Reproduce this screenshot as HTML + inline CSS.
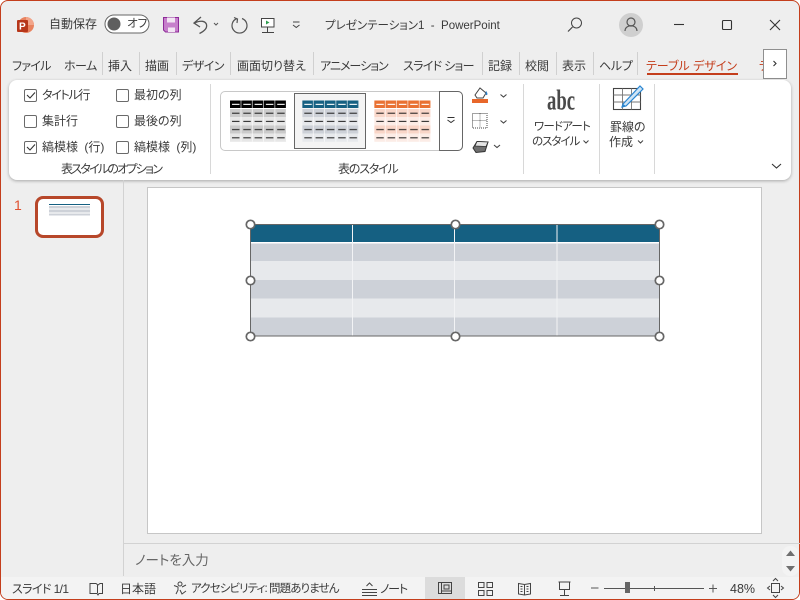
<!DOCTYPE html>
<html lang="ja"><head><meta charset="utf-8"><style>
html,body{margin:0;padding:0;width:800px;height:600px;overflow:hidden;background:#fff}
body{font-family:"Liberation Sans","Noto Sans CJK JP",sans-serif;font-size:12px;color:#3a3a3a;font-feature-settings:"palt";position:relative}
.t{position:absolute;white-space:nowrap;line-height:16px}
.b{position:absolute}
.cb{position:absolute;width:11px;height:11px;border:1px solid #6a6a6a;border-radius:2px;background:#fff}
svg{position:absolute;overflow:visible}
#win{position:absolute;left:0;top:0;width:798px;height:598px;background:#eee;border:1px solid #c43e1c;border-radius:8px;overflow:hidden}
</style></head><body>
<div id="win"></div>
<div class="b" style="left:1px;top:577px;width:798px;height:22px;background:#f3f3f3;border-radius:0 0 7px 7px"></div>
<!-- Title bar -->
<svg style="left:0;top:0" width="800" height="600" viewBox="0 0 800 600">
<circle cx="26" cy="25" r="8" fill="#e8825f"/><path d="M26 17a8 8 0 0 1 8 8h-8z" fill="#f2a58a"/>
<rect x="17" y="20" width="11" height="12" rx="1" fill="#b7371a"/>
<text x="19" y="29.500" font-family="'Liberation Sans',sans-serif" font-size="10" font-weight="700" fill="#fff">P</text>
<rect x="105" y="15" width="44" height="18" rx="9" fill="#fff" stroke="#666" stroke-width="1"/>
<circle cx="114" cy="24" r="6.500" fill="#5f5f5f"/>
<path d="M163.500 17.500h15v14.500h-13l-2-2z" fill="#c67fcb" stroke="#8d2a98" stroke-width="1"/>
<rect x="167" y="17.500" width="8" height="5" fill="#f2e4f3"/><rect x="168" y="27.500" width="7" height="4.500" fill="#f2e4f3"/>
<path d="M201 17l-7 6 6 4M194.500 23c6-3 11-2 12 1.500 1 4-3 7-7 9" fill="none" stroke="#555" stroke-width="1.300"/>
<path d="M214 23l2 2 2-2" fill="none" stroke="#555"/>
<path d="M237 18.500a7.500 7.500 0 1 0 5 0M234 17.500l3.500 1.500-.5 4" fill="none" stroke="#555" stroke-width="1.200"/>
<rect x="261.500" y="18.500" width="12.500" height="8.500" fill="#fff" stroke="#444"/><path d="M266 20.500l3.500 2-3.500 2z" fill="#2f9e4f"/>
<path d="M267.500 27v5M262 32.500h12" stroke="#444" fill="none"/>
<path d="M293 22h6.500M293 25l3.250 2.500 3.250-2.500" fill="none" stroke="#444"/>
<!-- search, user, controls -->
<circle cx="576.500" cy="23" r="5" fill="none" stroke="#444"/><path d="M572.500 27l-4.500 4.500" stroke="#444" stroke-width="1.200"/>
<circle cx="631" cy="25" r="12" fill="#cfcfcf"/><circle cx="631" cy="22" r="4" fill="none" stroke="#555" stroke-width="1.200"/><path d="M625 31c0-7 12-7 12 0" fill="none" stroke="#555" stroke-width="1.200"/>
<path d="M674 24.500h10" stroke="#333" stroke-width="1.100"/>
<rect x="722.500" y="20.500" width="9" height="9" rx="1" fill="none" stroke="#333" stroke-width="1.100"/>
<path d="M770 20l10 10M780 20l-10 10" stroke="#333" stroke-width="1.100"/>
</svg>
<div class="t" style="left:49px;top:16px">自動保存</div>
<div class="t" style="left:127px;top:16px;font-size:11.500px">オフ</div>
<div class="t" style="left:325px;top:18px;font-size:11.500px">プレゼンテーション1&nbsp; -&nbsp; PowerPoint</div>
<!-- Tabs -->
<div class="t" style="left:12px;top:58px;letter-spacing:-.7px">ファイル</div>
<div class="t" style="left:64px;top:58px;letter-spacing:-.5px">ホーム</div>
<div class="t" style="left:108px;top:58px">挿入</div>
<div class="t" style="left:145px;top:58px">描画</div>
<div class="t" style="left:182px;top:58px;letter-spacing:-.5px">デザイン</div>
<div class="t" style="left:237px;top:58px">画面切り替え</div>
<div class="t" style="left:320px;top:58px;letter-spacing:-1px">アニメーション</div>
<div class="t" style="left:403px;top:58px;letter-spacing:-.7px">スライド ショー</div>
<div class="t" style="left:488px;top:58px">記録</div>
<div class="t" style="left:525px;top:58px">校閲</div>
<div class="t" style="left:562px;top:58px">表示</div>
<div class="t" style="left:599px;top:58px;letter-spacing:-.3px">ヘルプ</div>
<div class="t" style="left:646px;top:58px;color:#c43e1c;font-weight:400">テーブル デザイン</div>
<div class="t" style="left:759px;top:58px;color:#c43e1c">テ</div>
<div class="b" style="left:647px;top:73px;width:91px;height:2px;background:#c43e1c"></div>
<div class="b" style="left:102px;top:52px;width:1px;height:23px;background:#d0d0d0;box-shadow:37px 0 #d0d0d0,74px 0 #d0d0d0,128px 0 #d0d0d0,211px 0 #d0d0d0,380px 0 #d0d0d0,417px 0 #d0d0d0,454px 0 #d0d0d0,491px 0 #d0d0d0,535px 0 #d0d0d0"></div>
<div class="b" style="left:763px;top:49px;width:22px;height:28px;background:#fff;border:1px solid #8f8f8f"></div>
<svg style="left:0;top:0" width="800" height="100"><path d="M773.500 61l2.500 2.500-2.500 2.500" fill="none" stroke="#333" stroke-width="1.100"/></svg>
<!-- Ribbon -->
<div class="b" style="left:9px;top:80px;width:782px;height:100px;background:#fff;border-radius:8px;box-shadow:0 1px 3px rgba(0,0,0,.3)"></div>
<div class="b" style="left:210px;top:84px;width:1px;height:90px;background:#d8d8d8;box-shadow:313px 0 #d8d8d8,389px 0 #d8d8d8,444px 0 #d8d8d8"></div>
<!-- Checkboxes -->
<div class="cb" style="left:24px;top:89px"></div><div class="cb" style="left:116px;top:89px"></div>
<div class="cb" style="left:24px;top:115px"></div><div class="cb" style="left:116px;top:115px"></div>
<div class="cb" style="left:24px;top:141px"></div><div class="cb" style="left:116px;top:141px"></div>
<svg style="left:0;top:0" width="100" height="160"><path d="M27 95l3 3 5-5.500M27 147l3 3 5-5.500" fill="none" stroke="#333" stroke-width="1.100"/></svg>
<div class="t" style="left:42px;top:87px;letter-spacing:-1.300px">タイトル行</div>
<div class="t" style="left:134px;top:87px">最初の列</div>
<div class="t" style="left:42px;top:113px">集計行</div>
<div class="t" style="left:134px;top:113px">最後の列</div>
<div class="t" style="left:42px;top:139px;word-spacing:3px">縞模様 (行)</div>
<div class="t" style="left:134px;top:139px;word-spacing:3px">縞模様 (列)</div>
<div class="t" style="left:61px;top:161px;letter-spacing:-1.750px">表スタイルのオプション</div>
<div class="t" style="left:338px;top:161px;letter-spacing:-1.200px">表のスタイル</div>
<!-- Gallery -->
<div class="b" style="left:220px;top:91px;width:241px;height:58px;border:1px solid #c8c8c8;border-radius:5px;background:#fff"></div>
<div class="b" style="left:294px;top:93px;width:70px;height:54px;border:1px solid #666;background:#f4f4f4"></div>
<div class="b" style="left:439px;top:91px;width:22px;height:58px;border:1px solid #666;border-radius:0 5px 5px 0;background:#fff"></div>
<svg style="left:0;top:0" width="800" height="180">
<defs>
<pattern id="d" width="11.300" height="8.200" patternUnits="userSpaceOnUse" x="0" y="8.500"><rect x="2" y="3.700" width="7.500" height="1" fill="#1a1a1a"/><rect x="10.700" y="0" width=".6" height="8.200" fill="#fff"/></pattern>
<pattern id="w" width="11.300" height="8" patternUnits="userSpaceOnUse" x="0" y="0"><rect x="2" y="3.300" width="7.500" height="1.100" fill="#fff"/><rect x="10.700" y="0" width=".6" height="8" fill="#fff"/></pattern>
</defs>
<g transform="translate(230,100.500)"><rect width="56.500" height="7.500" fill="#000"/><rect y="8.500" width="56.500" height="8.200" fill="#cbcbcb"/><rect y="16.700" width="56.500" height="8.200" fill="#e7e7e7"/><rect y="24.900" width="56.500" height="8.200" fill="#cbcbcb"/><rect y="33.100" width="56.500" height="8.200" fill="#e7e7e7"/><rect width="56.500" height="7.500" fill="url(#w)"/><rect y="8.500" width="56.500" height="32.800" fill="url(#d)"/></g>
<g transform="translate(302.300,100.500)"><rect width="56.500" height="7.500" fill="#156082"/><rect y="8.500" width="56.500" height="8.200" fill="#cdd1d8"/><rect y="16.700" width="56.500" height="8.200" fill="#e7e9ec"/><rect y="24.900" width="56.500" height="8.200" fill="#cdd1d8"/><rect y="33.100" width="56.500" height="8.200" fill="#e7e9ec"/><rect width="56.500" height="7.500" fill="url(#w)"/><rect y="8.500" width="56.500" height="32.800" fill="url(#d)"/></g>
<g transform="translate(374.300,100.500)"><rect width="56.500" height="7.500" fill="#e97132"/><rect y="8.500" width="56.500" height="8.200" fill="#f9d6c8"/><rect y="16.700" width="56.500" height="8.200" fill="#fcece6"/><rect y="24.900" width="56.500" height="8.200" fill="#f9d6c8"/><rect y="33.100" width="56.500" height="8.200" fill="#fcece6"/><rect width="56.500" height="7.500" fill="url(#w)"/><rect y="8.500" width="56.500" height="32.800" fill="url(#d)"/></g>
<path d="M447.500 117.500h7M447.500 120l3.500 2.500 3.500-2.500" fill="none" stroke="#333" stroke-width="1"/>
<!-- fill, border, eraser -->
<path d="M475 95l5-7 6 5-3 5h-6z" fill="#fff" stroke="#444"/><path d="M486 91c1 1 2 3 1 4-1 .5-2-1-1-4z" fill="#2a7fc9"/>
<rect x="472" y="99" width="16" height="4" fill="#e8672a"/>
<path d="M500.500 94.500l3 2.500 3-2.500M500.500 120.500l3 2.500 3-2.500M494 145l3 2.500 3-2.500" fill="none" stroke="#444" stroke-width="1.100"/>
<g shape-rendering="crispEdges"><rect x="472.500" y="113.500" width="14.500" height="14.500" fill="none" stroke="#444" stroke-dasharray="1 1"/>
<path d="M480 113.500v14.500M472.500 120.500h14.500" stroke="#777" stroke-dasharray="1 1" fill="none"/></g>
<path d="M473 148l4-6.500 11 .5-3 9.500-9 1z" fill="#6f6f6f" stroke="#333"/><path d="M477 141.500l11 .5-2 4.500-11-.5z" fill="#e4e4e4" stroke="#333" stroke-width=".8"/>
<!-- WordArt -->
<text x="547" y="109.500" font-family="'Liberation Serif',serif" font-size="29" font-weight="700" fill="#4a4a4a" textLength="28" lengthAdjust="spacingAndGlyphs">abc</text>
<!-- Borders -->
<rect x="613.500" y="88.500" width="27" height="21" fill="#fff" stroke="#444" stroke-width="1.100"/>
<path d="M613.500 95h27M613.500 102h27M622.500 88.500v21M631.500 88.500v21" stroke="#777" fill="none" stroke-width=".9"/>
<path d="M623 104l17-18 3 3-17 17-4 1z" fill="#cfe4f5" stroke="#2a86d1" stroke-width="1.200"/><path d="M622 107l1-3 3 2z" fill="#2a86d1"/>
<path d="M583.500 140.500l2.500 2.500 2.500-2.500M638 140.500l2.500 2.500 2.500-2.500" fill="none" stroke="#444"/>
<path d="M772 164l4.500 4 4.500-4" fill="none" stroke="#333" stroke-width="1.100"/>
</svg>
<div class="t" style="left:534px;top:119px;font-size:11.500px;letter-spacing:-.8px">ワードアート</div>
<div class="t" style="left:532px;top:134px;font-size:11.500px;letter-spacing:-1px">のスタイル</div>
<div class="t" style="left:610px;top:119px">罫線の</div>
<div class="t" style="left:609px;top:134px">作成</div>
<!-- Panes -->
<div class="b" style="left:123px;top:180px;width:1px;height:396px;background:#d2d2d2"></div>
<div class="b" style="left:124px;top:543px;width:676px;height:1px;background:#d2d2d2"></div>
<div class="t" style="left:14px;top:197px;color:#e0502f;font-size:14px">1</div>
<div class="b" style="left:35px;top:196px;width:63px;height:36px;border:3px solid #b7472a;border-radius:8px;background:#fff"></div>
<svg style="left:0;top:0" width="130" height="240">
<rect x="49" y="204" width="41" height="1" fill="#156082"/>
<rect x="49" y="206" width="41" height="2" fill="#cdd1d8"/><rect x="49" y="208" width="41" height="2" fill="#e7e9ec"/><rect x="49" y="210" width="41" height="2" fill="#cdd1d8"/><rect x="49" y="212" width="41" height="2" fill="#e7e9ec"/><rect x="49" y="214" width="41" height="1.500" fill="#cdd1d8"/>
</svg>
<div class="b" style="left:147px;top:187px;width:613px;height:345px;background:#fff;border:1px solid #c6c6c6"></div>
<svg style="left:0;top:0" width="800" height="600">
<rect x="250.500" y="224.500" width="409" height="111.500" fill="#cdd1d8"/>
<rect x="250.500" y="224.500" width="409" height="17.500" fill="#156082"/>
<rect x="250.500" y="242" width="409" height="1.500" fill="#fff"/>
<rect x="250.500" y="261" width="409" height="19" fill="#e7e9ec"/>
<rect x="250.500" y="298.500" width="409" height="19" fill="#e7e9ec"/>
<path d="M352.500 224.500V336M454.500 224.500V336M557 224.500V336" stroke="#f2f3f5" stroke-width="1" fill="none"/>
<rect x="250.500" y="224.500" width="409" height="111.500" fill="none" stroke="#666"/>
<g fill="#fff" stroke="#666" stroke-width="1.700">
<circle cx="250.500" cy="224.500" r="4.200"/><circle cx="455.500" cy="224.500" r="4.200"/><circle cx="659.500" cy="224.500" r="4.200"/>
<circle cx="250.500" cy="280.500" r="4.200"/><circle cx="659.500" cy="280.500" r="4.200"/>
<circle cx="250.500" cy="336.500" r="4.200"/><circle cx="455.500" cy="336.500" r="4.200"/><circle cx="659.500" cy="336.500" r="4.200"/>
</g>
<!-- scrollbar -->
<rect x="782" y="546" width="17" height="30" rx="8" fill="#f3f3f3"/>
<path d="M786 556l4.500-5.500 4.500 5.500zM786 566l4.500 5.500 4.500-5.500z" fill="#6f6f6f"/>
<!-- status icons -->
<path d="M90 583.500h6l2 1.500 2-1.500h2.500v10H99l-1 1.500-1-1.500h-7zM97.500 585v8" fill="none" stroke="#444"/>
<circle cx="180" cy="584" r="2" fill="none" stroke="#444"/><path d="M174 585.500l4 1.500v3l-2 4M186 585l-4 2M180 590l2 4 4-3" fill="none" stroke="#444"/>
<path d="M362 589.500h15M362 592.500h15M362 595.500h15M366.500 586l3-3 3 3" fill="none" stroke="#444"/>
<rect x="425" y="577" width="40" height="22" fill="#dcdcdc"/>
<path d="M438.500 582.500h13v11h-13zM441.500 582.500v11M444 585h5v4h-5zM441.500 591h10" fill="none" stroke="#444"/>
<path d="M478.500 582.500h5.500v5h-5.500zM487 582.500h5.500v5H487zM478.500 590.500h5.500v5h-5.500zM487 590.500h5.500v5H487z" fill="none" stroke="#444"/>
<path d="M518.500 583.500l6 1 6-1v10.500l-6 1-6-1zM524.500 584.500V595M520.500 586.500h2M520.500 589h2M520.500 591.500h2M526.500 586.500h2M526.500 589h2M526.500 591.500h2" fill="none" stroke="#444"/>
<path d="M558.500 582h12M559.500 582.500v7h10v-7M564.500 589.500v5.500M560 595.500h9" fill="none" stroke="#444"/>
<path d="M591 588h7.500M604 588.500h100M654.500 586v5M709 588.500h8M713 584.500v8" stroke="#555" fill="none"/>
<rect x="625" y="582" width="5" height="11" fill="#666"/>
<rect x="771.500" y="583.500" width="8" height="9" fill="none" stroke="#444"/>
<path d="M773 581l2.500-2.500L778 581M773 595l2.500 2.500L778 595M770 586l-2.500 2 2.500 2M781 586l2.500 2-2.500 2" fill="none" stroke="#444"/>
</svg>
<div class="t" style="left:135px;top:553px;font-size:13.500px;color:#666">ノートを入力</div>
<div class="t" style="left:12px;top:581px;letter-spacing:-.6px">スライド 1/1</div>
<div class="t" style="left:120px;top:581px">日本語</div>
<div class="t" style="left:191px;top:581px;font-size:11.500px;letter-spacing:-.9px">アクセシビリティ: 問題ありません</div>
<div class="t" style="left:380px;top:581px;letter-spacing:-1.200px">ノート</div>
<div class="t" style="left:730px;top:581px;font-size:12.500px">48%</div>
</body></html>
